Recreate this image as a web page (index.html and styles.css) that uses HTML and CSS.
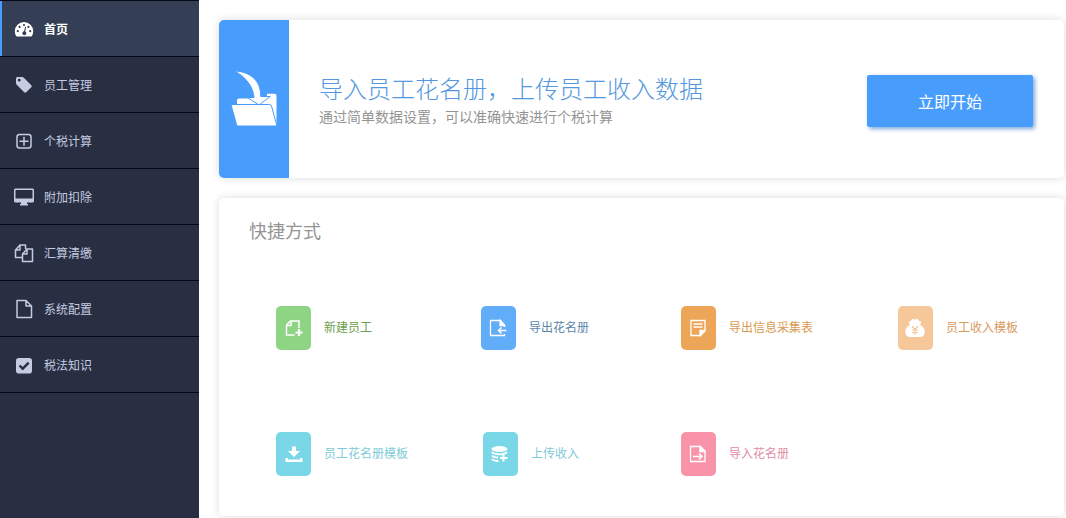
FILE: index.html
```html
<!DOCTYPE html>
<html lang="zh-CN">
<head>
<meta charset="utf-8">
<title>首页</title>
<link rel="stylesheet" href="styles.css">
</head>
<body>
<div class="app">
  <nav class="sidebar">
    <a class="nav-item active" href="#">
      <svg class="nav-icon" viewBox="0 0 20 20"><path fill="currentColor" d="M10 3a9.200 9.200 0 0 0-9.200 9.200c0 1.700.4 3.300 1.200 4.600.2.400.5.600.9.600h14.200c.4 0 .7-.2.900-.6.800-1.300 1.200-2.900 1.200-4.600A9.200 9.200 0 0 0 10 3z"/><g fill="#343e54"><circle cx="3.800" cy="12.200" r="1.100"/><circle cx="5.600" cy="7.900" r="1.100"/><circle cx="10" cy="6" r="1.100"/><circle cx="14.400" cy="7.900" r="1.100"/><circle cx="16.200" cy="12.200" r="1.100"/><path d="M11.200 7.800l.9.200-.9 4.400a2 2 0 1 1-1.100-.2z"/></g></svg>
      <span>首页</span>
    </a>
    <a class="nav-item" href="#">
      <svg class="nav-icon" viewBox="0 0 20 20"><path fill="currentColor" fill-rule="evenodd" d="M2 3.500v4.700c0 .6.300 1.200.7 1.600l7.500 7.500c.6.600 1.400.6 2 0l5.100-5.100c.6-.6.600-1.400 0-2L9.800 2.700C9.300 2.200 8.700 2 8 2H3.500C2.700 2 2 2.700 2 3.500zm3.200.3a1.400 1.400 0 1 1 0 2.800 1.400 1.400 0 0 1 0-2.800z"/></svg>
      <span>员工管理</span>
    </a>
    <a class="nav-item" href="#">
      <svg class="nav-icon" viewBox="0 0 20 20" fill="none" stroke="currentColor" stroke-width="1.500"><rect x="3" y="3.500" width="14" height="13.500" rx="2.500"/><path d="M10 5.800v9M5.500 10.300h9"/></svg>
      <span>个税计算</span>
    </a>
    <a class="nav-item" href="#">
      <svg class="nav-icon" viewBox="0 0 20 20"><path fill="currentColor" fill-rule="evenodd" d="M1.500 1.500h17c.8 0 1.500.7 1.500 1.500v11c0 .8-.7 1.500-1.500 1.500H13V17h1v1.500H6V17h1v-1.500H1.500C.7 15.500 0 14.800 0 14V3c0-.8.7-1.500 1.500-1.500zm0 1.500v8.500h17V3z"/></svg>
      <span>附加扣除</span>
    </a>
    <a class="nav-item" href="#">
      <svg class="nav-icon" viewBox="0 0 20 20" fill="none" stroke="currentColor" stroke-width="1.500" stroke-linejoin="round"><path d="M8 14.500H1.500V7L6 2h5.500v4M6 2v5H1.500M13 6h5.500v12.500H8.500V11L13 6v5H8.500"/></svg>
      <span>汇算清缴</span>
    </a>
    <a class="nav-item" href="#">
      <svg class="nav-icon" viewBox="0 0 20 20" fill="none" stroke="currentColor" stroke-width="1.500" stroke-linejoin="round"><path d="M3 1.500h9L17.500 7v11.500H3zM12 1.500V7h5.500"/></svg>
      <span>系统配置</span>
    </a>
    <a class="nav-item" href="#">
      <svg class="nav-icon" viewBox="0 0 20 20"><rect x="2" y="3" width="16" height="15.500" rx="2.800" fill="currentColor"/><path d="M5.500 10.500l3.200 3.200 6-6" fill="none" stroke="#282f42" stroke-width="2.400"/></svg>
      <span>税法知识</span>
    </a>
  </nav>

  <main class="content">
    <section class="card banner">
      <div class="banner-side">
        <svg class="banner-icon" viewBox="0 0 46 56"><g fill="#fff" stroke="#489dfc" stroke-width="1"><path stroke="none" d="M6 34v-4.500q0-2 2-2h28V22.700h7.500q2 0 2 2V52H38z"/><path d="M3.500 0C18 .5 30 8.500 29.700 25.500h9.500L28 34 16.500 26.500h6.500C22.500 17 15.500 6 3.500 0z"/><path d="M2 33.500h36.500q1.500 0 2 1.500L46 55H7.500q-1.500 0-2-1.500L.5 35.500Q0 33.500 2 33.500z"/></g></svg>
      </div>
      <div class="banner-text">
        <h1 class="banner-title">导入员工花名册，上传员工收入数据</h1>
        <p class="banner-note">通过简单数据设置，可以准确快速进行个税计算</p>
      </div>
      <button class="start" type="button">立即开始</button>
    </section>

    <section class="card shortcuts">
      <h2 class="heading">快捷方式</h2>
      <div class="grid">
        <a class="shortcut green" href="#">
          <span class="tile"><svg class="tile-icon" viewBox="0 0 18 18" fill="none" stroke="#fff" stroke-width="1.500"><path d="M9.500 16H1.500V6l4-4h8.500v7M6 2v4.500H1.500"/><path stroke-width="2.200" d="M14 10v7M10.500 13.500h7"/></svg></span>
          <span class="label">新建员工</span>
        </a>
        <a class="shortcut blue" href="#">
          <span class="tile"><svg class="tile-icon" viewBox="0 0 18 18" fill="none" stroke="#fff" stroke-width="1.300"><path d="M15.500 8V6l-4-4.500H1.500v15h14V15"/><path fill="#fff" d="M11 1.500V6.500h4.500z"/><path stroke-width="1.600" d="M17.500 11.500H9.500M12.500 8.500l-3 3 3 3"/></svg></span>
          <span class="label">导出花名册</span>
        </a>
        <a class="shortcut orange" href="#">
          <span class="tile"><svg class="tile-icon" viewBox="0 0 18 18" fill="none" stroke="#fff" stroke-width="1.300"><path d="M2 1.500h14V12l-4.500 4.500H2z"/><path fill="#fff" d="M16 11.500h-5v5z"/><path d="M4.500 5h9M4.500 8h9"/></svg></span>
          <span class="label">导出信息采集表</span>
        </a>
        <a class="shortcut peach" href="#">
          <span class="tile"><svg class="tile-icon" viewBox="0 0 18 18"><path fill="#fff" d="M4.500 5.500C2 5 2.500 1.800 5 2 5.500-.2 8-.5 9 .8c1-1.300 3.500-1 4 1.200 2.500-.2 3 3 .5 3.500C17 7 19 10 18.800 13c-.2 3.300-2.200 5-4.800 5H4c-2.600 0-4.600-1.700-4.800-5C-1 10 1 7 4.500 5.500z"/><path fill="none" stroke="#f5c799" stroke-width="1.200" d="M6 7l3 3.500L12 7M9 10.500V16M6 11h6M6 13.500h6"/></svg></span>
          <span class="label">员工收入模板</span>
        </a>
        <a class="shortcut cyan" href="#">
          <span class="tile"><svg class="tile-icon" viewBox="0 0 18 18" fill="#fff"><path d="M7 1.500h4V6h4l-6 6-6-6h4zM.5 13H3v1.500h12V13h2.500v4H.5z"/></svg></span>
          <span class="label">员工花名册模板</span>
        </a>
        <a class="shortcut cyan inset" href="#">
          <span class="tile"><svg class="tile-icon" viewBox="0 0 18 18" fill="none" stroke="#fff"><ellipse cx="8.500" cy="4" rx="8" ry="3" fill="#fff" stroke="none"/><path stroke-width="1.800" d="M1 7c1 1.800 4 2.300 8 2.300 3 0 5.500-.5 7-2.300M1 10.500c1 1.400 3 2 6 2M1 14c1 1.400 3 2 6.500 2"/><path stroke-width="2" d="M12.500 9.500v7M9 13h7.500"/></svg></span>
          <span class="label">上传收入</span>
        </a>
        <a class="shortcut pink" href="#">
          <span class="tile"><svg class="tile-icon" viewBox="0 0 18 18" fill="none" stroke="#fff" stroke-width="1.300"><path d="M1.500 1.500h10L16 6v10.500H1.500z"/><path fill="#fff" d="M11 1.500V6.500h5z"/><path stroke-width="1.600" d="M4 11.500h9M10 8.500l3 3-3 3"/></svg></span>
          <span class="label">导入花名册</span>
        </a>
      </div>
    </section>
  </main>
</div>
</body>
</html>
```
FILE: styles.css
```css
* {
  box-sizing: border-box;
}

body {
  margin: 0;
  background: #fff;
  font-family: "Noto Sans CJK SC", sans-serif;
  font-size: 12px;
}

a {
  color: inherit;
  text-decoration: none;
}

h1, h2, p {
  margin: 0;
  font-weight: 400;
}

.app {
  display: flex;
  min-height: 100vh;
}

.sidebar {
  flex: none;
  width: 199px;
  background: #282f42;
  border-top: 1px solid #050817;
}

.nav-item {
  display: flex;
  align-items: center;
  gap: 10px;
  height: 56px;
  padding-left: 14px;
  border-bottom: 1px solid #050817;
  color: #c5cbe0;
}

.nav-item.active {
  padding-left: 12px;
  background: #343e54;
  box-shadow: inset 2px 0 #489dfc;
  padding-left: 14px;
  color: #fff;
  font-weight: 700;
}

.nav-icon {
  width: 20px;
  height: 20px;
}

.content {
  flex: 1;
  display: flex;
  flex-direction: column;
  gap: 20px;
  padding: 20px 2px 2px 20px;
}

.card {
  border-radius: 5px;
  background: #fff;
  box-shadow: 0 0 8px rgba(0, 0, 0, 0.14);
}

.banner {
  display: flex;
  align-items: center;
  height: 158px;
  padding-right: 31px;
}

.banner-side {
  display: flex;
  align-items: center;
  align-self: stretch;
  justify-content: center;
  width: 70px;
  border-radius: 5px 0 0 5px;
  background: #489dfc;
}

.banner-icon {
  width: 46px;
  height: 56px;
}

.banner-text {
  flex: 1;
  padding: 2px 0 0 30px;
}

.banner-title {
  color: #5297e0;
  font-size: 24px;
  font-weight: 300;
  line-height: 32px;
}

.banner-note {
  color: #949494;
  font-size: 14px;
  line-height: 24px;
}

.start {
  width: 166px;
  height: 52px;
  margin-top: 4px;
  padding-bottom: 2px;
  border: 0;
  border-radius: 2px;
  background: #489dfc;
  box-shadow: 2px 2px 4px rgba(40, 110, 200, 0.6);
  color: #fff;
  font-family: inherit;
  font-size: 16px;
}

.shortcuts {
  flex: 1;
  padding: 18px 46px 40px 30px;
}

.heading {
  color: #949494;
  font-size: 18px;
  line-height: 28px;
}

.grid {
  display: grid;
  grid-template-columns: 205fr 200fr 217fr 120fr;
  row-gap: 82px;
  margin-top: 62px;
  padding-left: 27px;
}

.shortcut {
  display: flex;
  align-items: center;
  gap: 13px;
  white-space: nowrap;
}

.inset {
  padding-left: 2px;
}

.label {
  padding-bottom: 4px;
}

.tile {
  display: flex;
  align-items: center;
  justify-content: center;
  width: 35px;
  height: 44px;
  border-radius: 5px;
}

.tile-icon {
  width: 18px;
  height: 18px;
  overflow: visible;
}

.green { color: #6b9e4d; }
.green .tile { background: #8dd583; }
.blue { color: #5a86ac; }
.blue .tile { background: #62adfa; }
.orange { color: #d99a50; }
.orange .tile { background: #eda558; }
.peach { color: #d99a5c; }
.peach .tile { background: #f5c799; }
.cyan { color: #80cbd8; }
.cyan .tile { background: #7ad7e8; }
.pink { color: #e28ba4; }
.pink .tile { background: #f993a9; }
```
